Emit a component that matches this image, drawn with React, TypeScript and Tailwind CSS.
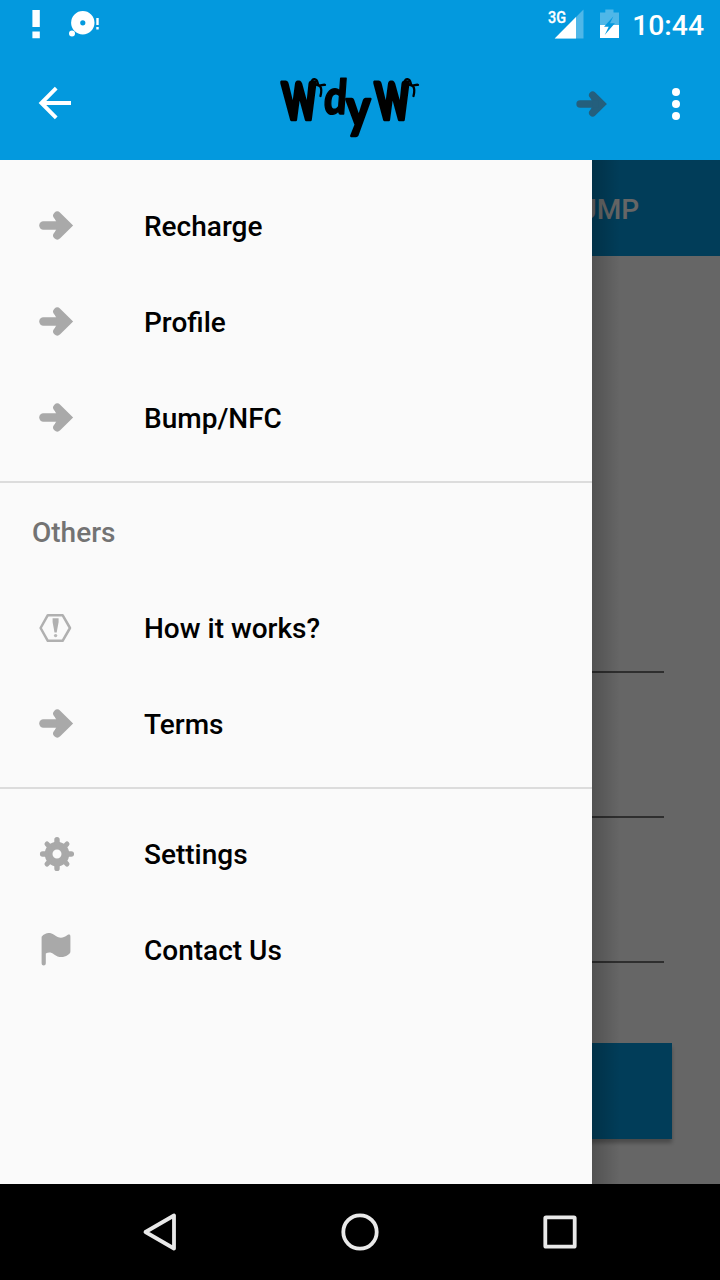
import React from "react";

function ArrowIcon({ className }: { className: string }) {
  return (
    <svg viewBox="0 0 36 30" className={className} fill="none" stroke="currentColor">
      <path d="M5.4 14.5H24" strokeWidth="8.4" strokeLinecap="round" />
      <path d="M19.3 4.6L29.3 14.5L19.3 24.4" strokeWidth="8.2" strokeLinecap="round" />
      <path d="M16.5 7L21 10.6H26V18.4H21L16.5 22L20 14.5Z" fill="currentColor" stroke="none" />
    </svg>
  );
}

function AlertIcon() {
  return (
    <svg viewBox="0 0 36 36" className="h-9 w-9" fill="none">
      <path d="M9.8 5.2H24.6L32 18L24.6 30.8H9.8L2.6 18Z" stroke="#b0b0b0" strokeWidth="2.5" strokeLinejoin="round" />
      <path d="M14.6 8.2H20.6V12L18.7 22.4H16.5L14.6 12Z" fill="#b0b0b0" />
      <circle cx="17.6" cy="25.6" r="1.7" fill="#b8b8b8" />
    </svg>
  );
}

function GearIcon() {
  return (
    <svg viewBox="0 0 36 36" className="h-9 w-9" stroke="#a9a9a9" fill="none" strokeLinecap="round">
      <circle cx="19" cy="18" r="8.4" strokeWidth="7.8" />
      <path d="M19 7V3.6M19 29V32.4M8 18H4.6M30 18H33.4" strokeWidth="5.4" />
      <path d="M10.9 9.9L9 8M27.1 9.9L29 8M10.9 26.1L9 28M27.1 26.1L29 28" strokeWidth="5" />
    </svg>
  );
}

function FlagIcon() {
  return (
    <svg viewBox="0 0 36 36" className="h-9 w-9" fill="#a9a9a9">
      <path d="M3.6 4.8C7.4 0 12.4.2 16 2.8C21 6.2 24 7 29.5 3C31.2 2.2 32.4 2.6 32.4 4.4V19.6C32.4 21.4 31.2 22.2 29.8 23C25 26.2 20 25.4 16.1 22.4C13 20 10.5 20.2 7.8 21.4V31.2C7.8 34.2 3.6 34.2 3.6 31.2Z" />
    </svg>
  );
}

function Logo() {
  return (
    <svg viewBox="0 0 160 90" className="absolute left-[270px] top-3 h-[90px] w-40 blur-[0.5px]" fill="#000" stroke="#000" fontFamily="Lato, sans-serif" fontWeight="900" strokeLinejoin="round">
      <text transform="translate(14 59) skewX(4) scale(.64 1)" fontSize="50" strokeWidth="4.5">W</text>
      <text transform="translate(53 54) skewX(-4) scale(.84 1)" fontSize="48" strokeWidth="1.5">d</text>
      <text transform="translate(76 66.5) skewX(0) scale(1 1.14)" fontSize="46" strokeWidth="2">y</text>
      <text transform="translate(107 59) skewX(4) scale(.64 1)" fontSize="50" strokeWidth="4.5">W</text>
      <g fill="none" strokeWidth="2.3" strokeLinecap="round">
        <path d="M50.5 36C53 26 49 25 46 24.5C41 24 41 19 44.5 19.2C48.5 19.5 47 25 49 25.4C51 25.8 52.5 24.5 55 24.8" />
        <path d="M143.5 36C146 26 142 25 139 24.5C134 24 134 19 137.5 19.2C141.5 19.5 140 25 142 25.4C144 25.8 145.5 24.5 148 24.8" />
      </g>
    </svg>
  );
}

function MenuItem({ icon, label }: { icon: React.ReactNode; label: string }) {
  return (
    <div className="flex h-24 items-center pl-[38px]">
      <span className="flex w-[106px] items-center">{icon}</span>
      <span className="pt-0.5">{label}</span>
    </div>
  );
}

const arrow = <ArrowIcon className="h-[30px] w-9 text-[#a9a9a9]" />;

export default function App() {
  return (
    <div className="flex h-[1280px] w-[720px] flex-col overflow-hidden bg-white font-['Roboto',sans-serif]">
      <div className="flex h-12 items-center justify-between bg-[#0399de] pl-8 pr-4 text-white">
        <svg viewBox="0 0 80 48" className="h-12 w-20" fill="white">
          <path d="M.4 10h7.4v17H.4zM.4 31.6h7.4v6.6H.4zM64.3 18h2.4v7h-2.4zM64.3 27h2.4v2.5h-2.4z" />
          <path fillRule="evenodd" d="M50.8 11a11.6 11.6 0 1 1 0 23.4a11.6 11.6 0 0 1 0-23.4zm0 9.2a2.6 2.6 0 1 0 0 5.2a2.6 2.6 0 0 0 0-5.2z" />
          <circle cx="40" cy="33.5" r="3" />
        </svg>
        <div className="flex items-center">
          <svg viewBox="0 0 84 48" className="h-12 w-[84px]" fill="white">
            <text x="0" y="22.5" fontSize="16.5" fontWeight="500" textLength="18" lengthAdjust="spacingAndGlyphs" stroke="white" strokeWidth=".3">3G</text>
            <path d="M35.5 9.5V38.5H6.7Z" opacity=".3" />
            <path d="M28 17V38.5H6.7Z" />
            <path d="M57.3 9.5h8.2v3h5.5V25H52V12.5h5.3Z" opacity=".3" />
            <path d="M52 25H71V38H52Z" />
            <path d="M65.3 16.5L56 26.7H60.7L56.7 34.9L66.9 23.3H62Z" fill="#0399de" />
          </svg>
          <span className="pt-[3px] text-[28.3px] font-medium leading-8">10:44</span>
        </div>
      </div>

      <div className="relative flex h-28 items-center justify-between bg-[#0399de] pb-0.5 pl-9 pr-8">
        <svg viewBox="0 0 38 38" className="h-[38px] w-[38px]" fill="none" stroke="white" strokeWidth="3.9">
          <path d="M35 19H6M20.2 4.2L5.4 19L20.2 33.8" />
        </svg>
        <Logo />
        <div className="flex items-center gap-14 pt-0.5">
          <ArrowIcon className="h-[27px] w-[33px] text-[#245f7d]" />
          <svg viewBox="0 0 24 36" className="h-9 w-6" fill="white">
            <circle cx="12" cy="6" r="4" />
            <circle cx="12" cy="18" r="4" />
            <circle cx="12" cy="30" r="4" />
          </svg>
        </div>
      </div>

      <div className="relative h-[1024px]">
        <div className="flex h-full flex-col">
          <div className="flex h-24 items-center justify-end bg-[#0399de] pr-[81px] pt-1 text-[28px] font-medium text-white">BUMP</div>
          <div className="flex flex-col gap-[143px] px-14 pt-[415px]">
            <div className="h-0.5 bg-[#747474]" />
            <div className="h-0.5 bg-[#747474]" />
            <div className="h-0.5 bg-[#747474]" />
          </div>
          <div className="mx-12 mt-20 h-24 bg-[#0399de] shadow-[0_4px_4px_rgba(0,0,0,0.28)]" />
        </div>

        <div className="absolute inset-0 flex bg-black/60">
          <nav className="h-full w-[592px] bg-[#fafafa] pt-[18px] text-[28px] font-medium text-black">
            <MenuItem icon={arrow} label="Recharge" />
            <MenuItem icon={arrow} label="Profile" />
            <MenuItem icon={arrow} label="Bump/NFC" />
            <div className="mt-[15px] h-0.5 bg-[#dcdcdc]" />
            <div className="mt-px flex h-24 items-center pl-8 pt-0.5 text-[#737373]">Others</div>
            <MenuItem icon={<AlertIcon />} label="How it works?" />
            <MenuItem icon={arrow} label="Terms" />
            <div className="mt-[15px] h-0.5 bg-[#dcdcdc]" />
            <div className="pt-[17px]">
              <MenuItem icon={<GearIcon />} label="Settings" />
              <MenuItem icon={<FlagIcon />} label="Contact Us" />
            </div>
          </nav>
          <div className="h-full w-7 bg-linear-to-r from-black/20 to-transparent" />
        </div>
      </div>

      <div className="flex h-24 items-center justify-center gap-[152px] bg-black">
        {[
          <path key="back" d="M9.5 24L38 7.5V40.5Z" strokeLinejoin="round" />,
          <circle key="home" cx="24" cy="24" r="16.7" />,
          <rect key="recent" x="9.3" y="9.3" width="29.4" height="29.4" rx=".8" />,
        ].map((shape, i) => (
          <svg key={i} viewBox="0 0 48 48" className="h-12 w-12" fill="none" stroke="#e9e9e9" strokeWidth="3.8">
            {shape}
          </svg>
        ))}
      </div>
    </div>
  );
}
